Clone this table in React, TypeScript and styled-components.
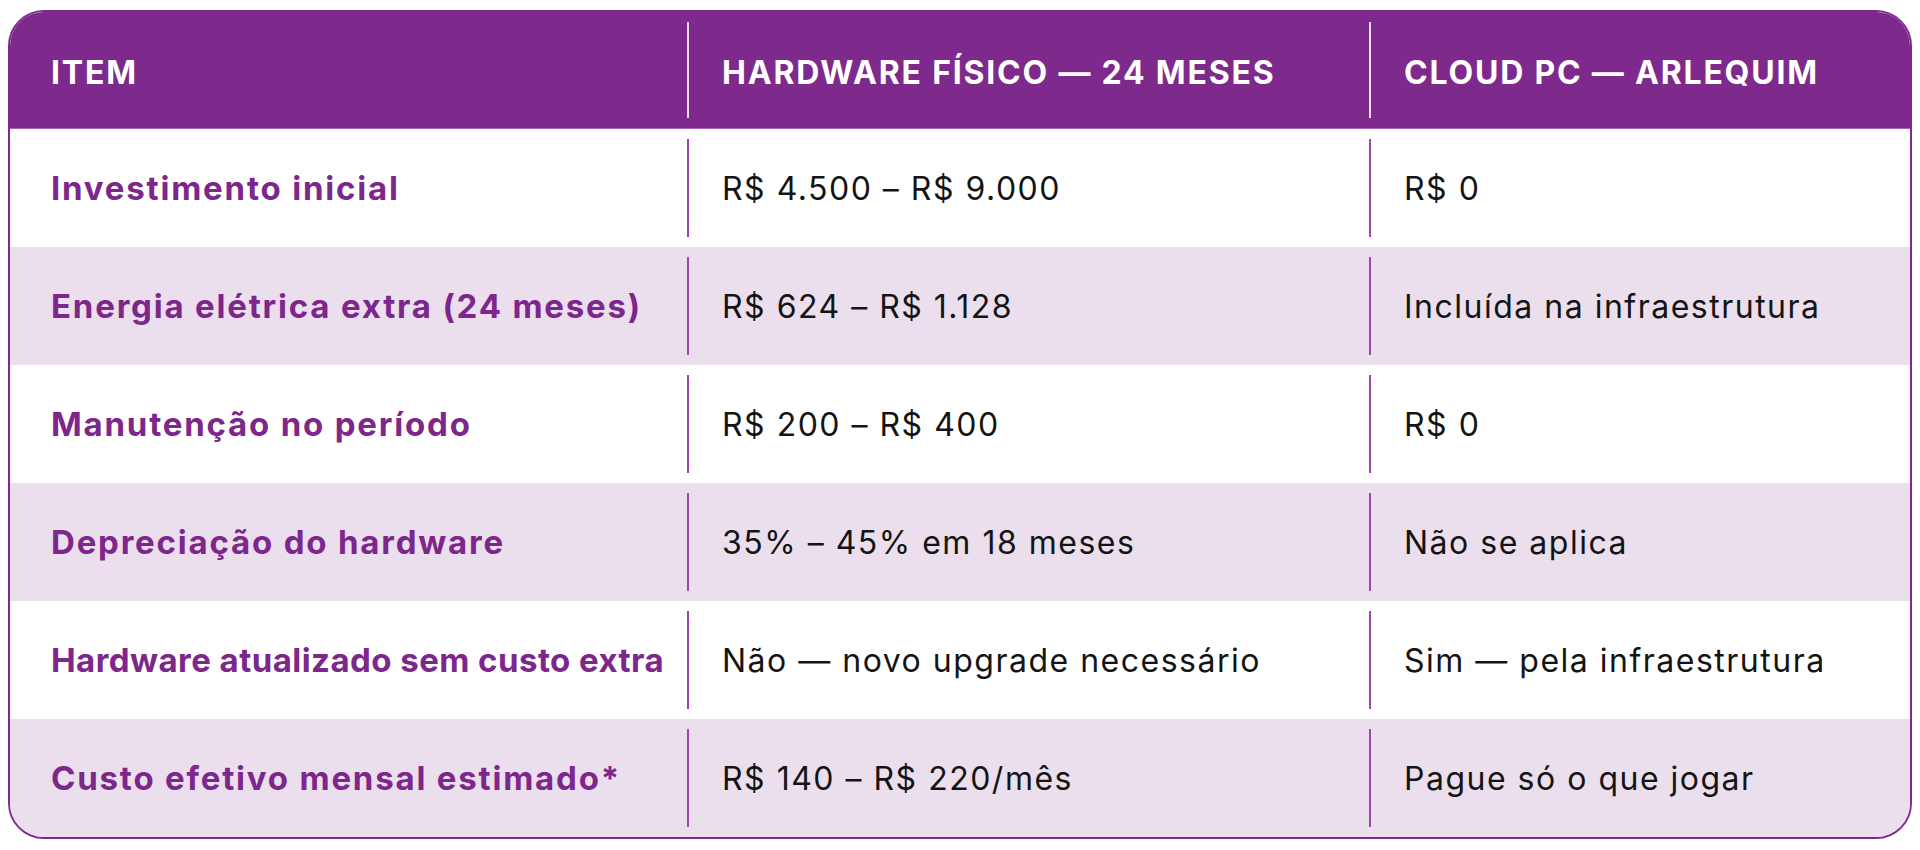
import React from 'react';
import styled, { createGlobalStyle } from 'styled-components';

const GlobalStyle = createGlobalStyle`
  body {
    margin: 0;
    padding: 10px 8px;
    background: #ffffff;
    font-family: Inter, 'Open Sans', sans-serif;
  }
`;

const Table = styled.div`
  border: 2px solid #7e2a8c;
  border-radius: 36px;
  overflow: hidden;
  background: #ffffff;
`;

type Shade = 'head' | 'white' | 'tint';

const Row = styled.div<{ $shade: Shade }>`
  display: grid;
  grid-template-columns: 677px 682px 1fr;
  height: ${(p) => (p.$shade === 'head' ? '116px' : '118px')};
  background: ${(p) =>
    p.$shade === 'head' ? '#7e2a8c' : p.$shade === 'tint' ? '#ebdfed' : '#ffffff'};
  border-bottom: ${(p) => (p.$shade === 'head' ? '1px solid #a865b4' : 'none')};
`;

const Cell = styled.div<{ $first?: boolean; $head?: boolean }>`
  position: relative;
  display: flex;
  align-items: center;
  padding-left: ${(p) => (p.$first ? '41px' : '35px')};
  white-space: nowrap;

  &::before {
    content: '';
    display: ${(p) => (p.$first ? 'none' : 'block')};
    position: absolute;
    left: 0;
    top: 10px;
    bottom: 10px;
    width: 2px;
    background: ${(p) => (p.$head ? 'rgba(255, 255, 255, 0.85)' : '#9a48a8')};
  }
`;

const HeadText = styled.span`
  color: #ffffff;
  font-size: 32px;
  font-weight: 700;
  text-transform: uppercase;
  letter-spacing: 1.8px;
  margin-top: 4px;
`;

const Label = styled.span<{ $tight?: boolean }>`
  color: #7d268c;
  font-size: 33px;
  font-weight: 700;
  letter-spacing: ${(p) => (p.$tight ? '0.45px' : '1.8px')};
`;

const Value = styled.span`
  color: #141414;
  font-size: 32px;
  font-weight: 400;
  letter-spacing: 1.5px;
`;

const rows = [
  ['Investimento inicial', 'R$ 4.500 – R$ 9.000', 'R$ 0'],
  ['Energia elétrica extra (24 meses)', 'R$ 624 – R$ 1.128', 'Incluída na infraestrutura'],
  ['Manutenção no período', 'R$ 200 – R$ 400', 'R$ 0'],
  ['Depreciação do hardware', '35% – 45% em 18 meses', 'Não se aplica'],
  ['Hardware atualizado sem custo extra', 'Não — novo upgrade necessário', 'Sim — pela infraestrutura'],
  ['Custo efetivo mensal estimado*', 'R$ 140 – R$ 220/mês', 'Pague só o que jogar'],
];

const headers = ['Item', 'Hardware físico — 24 meses', 'Cloud PC — Arlequim'];

const App: React.FC = () => {
  return (
    <>
      <GlobalStyle />
      <Table>
        <Row $shade="head">
          {headers.map((h, i) => (
            <Cell key={h} $first={i === 0} $head>
              <HeadText>{h}</HeadText>
            </Cell>
          ))}
        </Row>
        {rows.map((r, idx) => (
          <Row key={r[0]} $shade={idx % 2 === 0 ? 'white' : 'tint'}>
            <Cell $first>
              {/* the longest label is squeezed to fit its column */}
              <Label $tight={r[0].length > 34}>{r[0]}</Label>
            </Cell>
            <Cell>
              <Value>{r[1]}</Value>
            </Cell>
            <Cell>
              <Value>{r[2]}</Value>
            </Cell>
          </Row>
        ))}
      </Table>
    </>
  );
};

export default App;
